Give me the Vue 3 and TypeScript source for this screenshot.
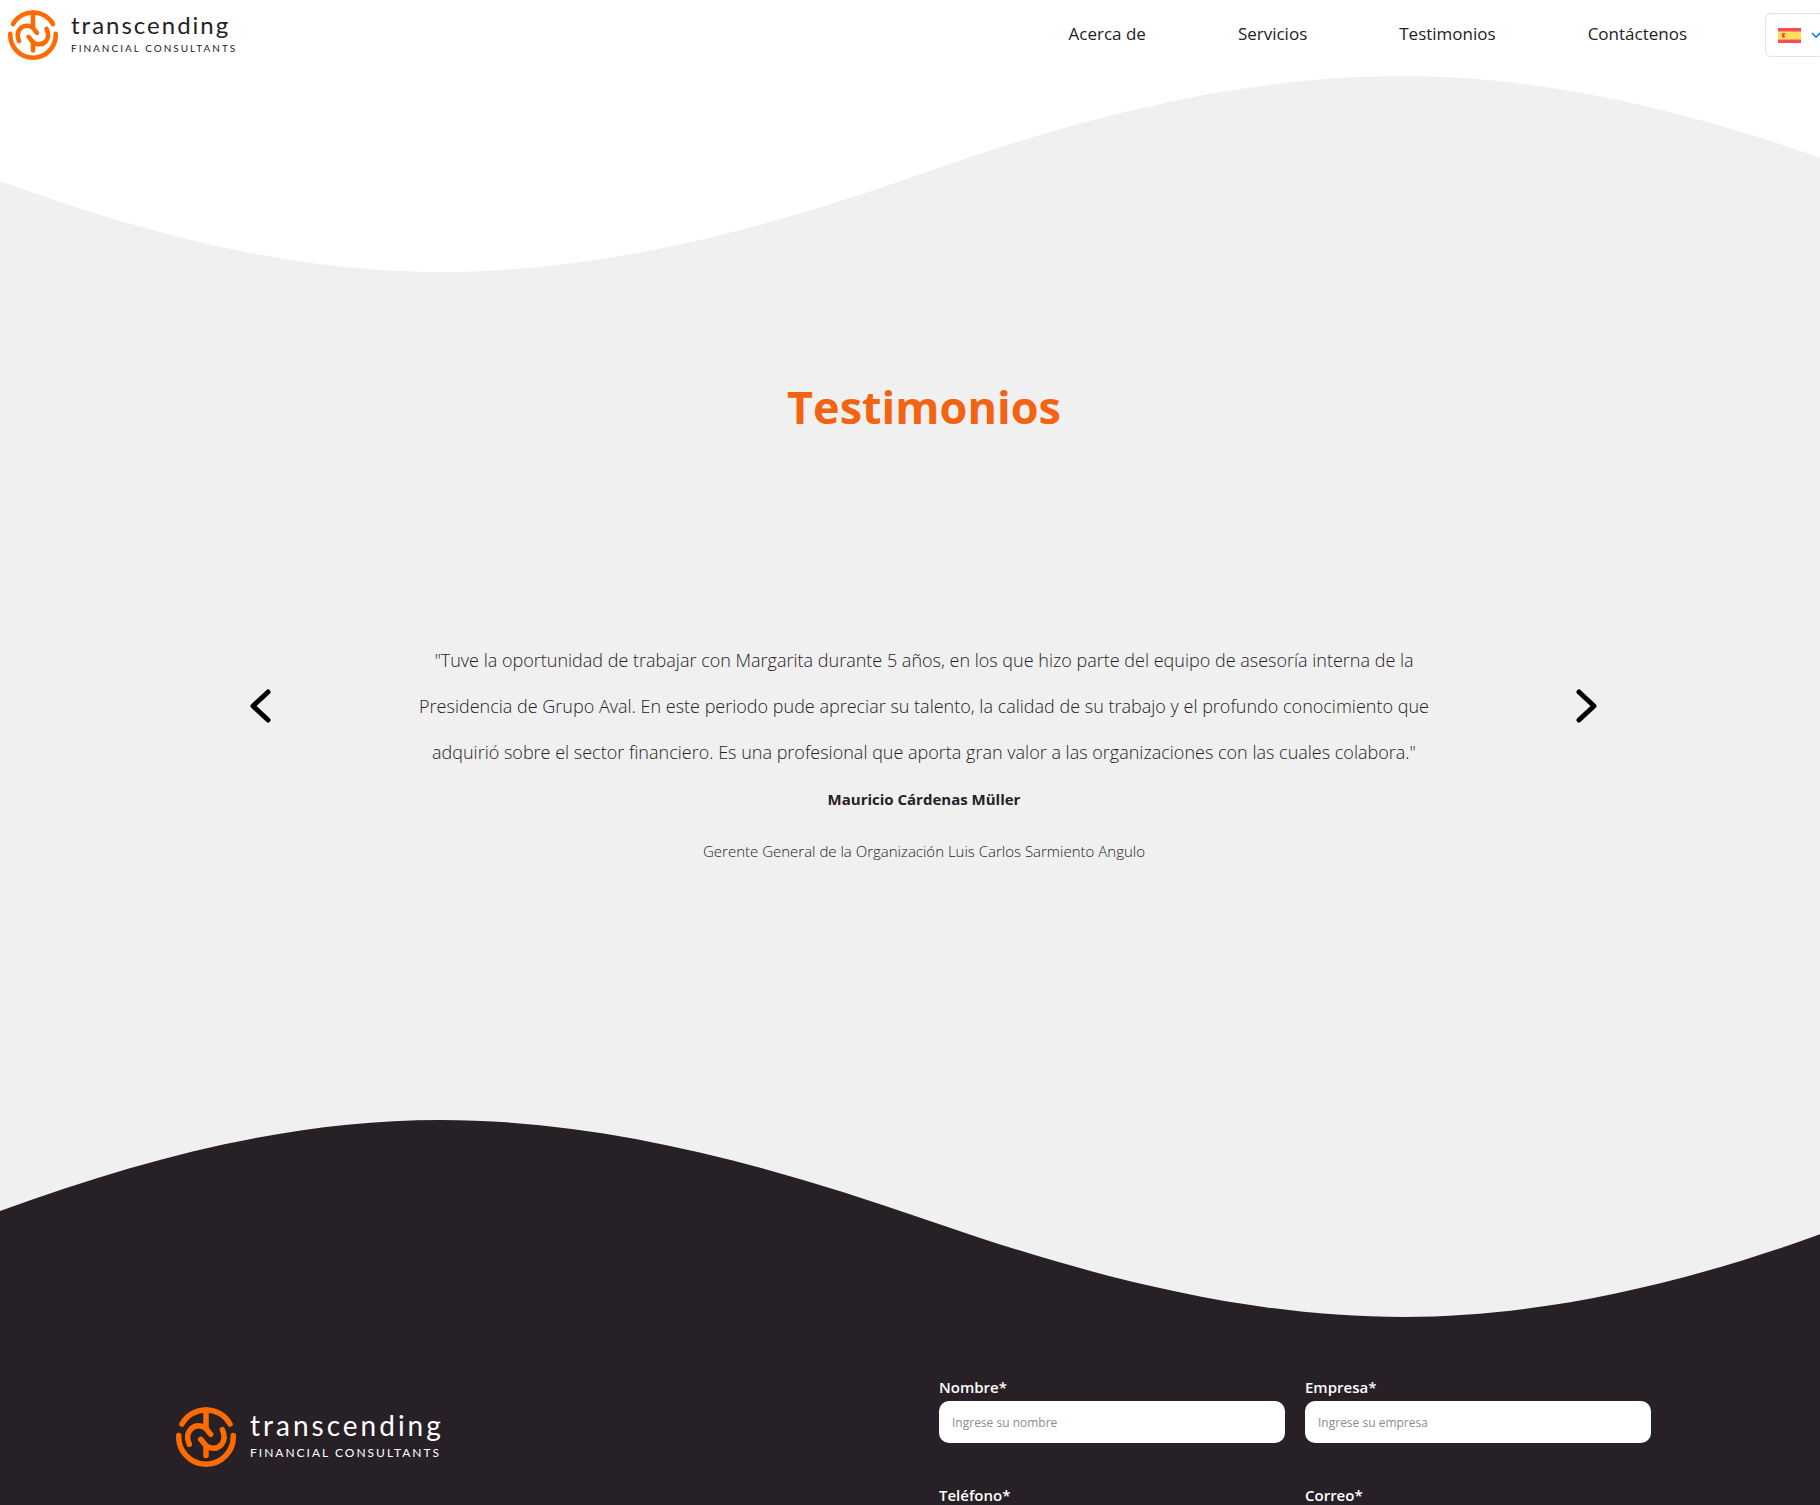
<script setup lang="ts">
import { ref } from 'vue'

interface NavLink { label: string; href: string }
interface Field { id: string; label: string; placeholder: string; type: string }

const links: NavLink[] = [
  { label: 'Acerca de', href: '#acerca' },
  { label: 'Servicios', href: '#servicios' },
  { label: 'Testimonios', href: '#testimonios' },
  { label: 'Contáctenos', href: '#contacto' },
]

const fields: Field[] = [
  { id: 'nombre', label: 'Nombre*', placeholder: 'Ingrese su nombre', type: 'text' },
  { id: 'empresa', label: 'Empresa*', placeholder: 'Ingrese su empresa', type: 'text' },
  { id: 'telefono', label: 'Teléfono*', placeholder: '', type: 'tel' },
  { id: 'correo', label: 'Correo*', placeholder: '', type: 'email' },
]

const values = ref<Record<string, string>>({ nombre: '', empresa: '', telefono: '', correo: '' })
</script>

<template>
  <div class="page">
    <div class="canvas">
      <header class="topbar">
        <a class="brand" href="#inicio">
          <svg class="mark" viewBox="0 0 60 60" aria-hidden="true">
            <g fill="none" stroke="#ff6b00" stroke-width="5.5" stroke-linecap="round" stroke-linejoin="round">
              <path d="M6 17A27.500 27.500 0 0 1 54 17" />
              <path d="M2.750 28.500A27.300 27.300 0 0 0 30 57.200A27.300 27.300 0 0 0 57.250 28.500" />
              <path d="M30 3V21" />
              <path d="M13.300 37.300C8 25 17 17 26 19.300C32 21 31 24 34.700 27.300" />
              <path d="M46.300 22.700C52 35 43 43 34 40.700C28 39 28.500 36 24.700 32.300" />
              <path d="M30 39V48.500" />
            </g>
          </svg>
          <span class="words"><span class="name">transcending</span><span class="tag">FINANCIAL CONSULTANTS</span></span>
        </a>
        <nav class="nav">
          <a v-for="link in links" :key="link.href" :href="link.href">{{ link.label }}</a>
        </nav>
        <button class="lang" type="button" aria-label="Español">
          <svg class="flag" viewBox="0 0 23 15" aria-hidden="true">
            <path fill="#ff4b55" d="M0 0H23V15H0Z" />
            <path fill="#ffe15a" d="M0 4H23V11H0Z" />
            <path fill="#ff9a57" d="M0 3H23V4H0ZM0 11H23V12H0Z" />
            <path fill="#f5c98a" d="M2 5H3V10H2ZM8 5H9V10H8Z" />
            <path fill="#e8503a" d="M4 5H7V7H6V8H7V9L5 10L4 9Z" />
          </svg>
          <svg class="caret" viewBox="0 0 10 6" aria-hidden="true">
            <path d="M1 1L5 5L9 1" fill="none" stroke="#1976d2" stroke-width="1.6" />
          </svg>
        </button>
      </header>

      <svg class="wave" viewBox="0 0 1848 200" preserveAspectRatio="none" aria-hidden="true">
        <path fill="#f0f0f0" d="M0 105C150 160 295 196 440 196C600 196 760 155 924 97C1088 39 1244 0 1404 0C1549 0 1700 37 1848 92V200H0Z" />
      </svg>

      <main id="testimonios" class="testimonials">
        <h2>Testimonios</h2>
        <div class="carousel">
          <button type="button" class="arrow" aria-label="Anterior">
            <svg viewBox="0 0 22 34" aria-hidden="true"><path d="M18 3L3 17L18 31" /></svg>
          </button>
          <figure class="slide">
            <blockquote>
              "Tuve la oportunidad de trabajar con Margarita durante 5 años, en los que hizo parte del equipo de asesoría interna de la<br>
              Presidencia de Grupo Aval. En este periodo pude apreciar su talento, la calidad de su trabajo y el profundo conocimiento que<br>
              adquirió sobre el sector financiero. Es una profesional que aporta gran valor a las organizaciones con las cuales colabora."
            </blockquote>
            <figcaption>
              <strong>Mauricio Cárdenas Müller</strong>
              <span>Gerente General de la Organización Luis Carlos Sarmiento Angulo</span>
            </figcaption>
          </figure>
          <button type="button" class="arrow" aria-label="Siguiente">
            <svg viewBox="0 0 22 34" aria-hidden="true"><path d="M3 3L18 17L3 31" /></svg>
          </button>
        </div>
      </main>

      <svg class="wave dark" viewBox="0 0 1848 200" preserveAspectRatio="none" aria-hidden="true">
        <path fill="#272026" d="M0 91C150 36 295 0 440 0C600 0 760 42 924 99C1088 156 1244 197 1404 197C1549 197 1700 160 1848 104V200H0Z" />
      </svg>

      <footer id="contacto" class="footer">
        <a class="brand large" href="#inicio">
          <svg class="mark" viewBox="0 0 60 60" aria-hidden="true">
            <g fill="none" stroke="#ff6b00" stroke-width="5.5" stroke-linecap="round" stroke-linejoin="round">
              <path d="M6 17A27.500 27.500 0 0 1 54 17" />
              <path d="M2.750 28.500A27.300 27.300 0 0 0 30 57.200A27.300 27.300 0 0 0 57.250 28.500" />
              <path d="M30 3V21" />
              <path d="M13.300 37.300C8 25 17 17 26 19.300C32 21 31 24 34.700 27.300" />
              <path d="M46.300 22.700C52 35 43 43 34 40.700C28 39 28.500 36 24.700 32.300" />
              <path d="M30 39V48.500" />
            </g>
          </svg>
          <span class="words"><span class="name">transcending</span><span class="tag">FINANCIAL CONSULTANTS</span></span>
        </a>
        <form class="form" @submit.prevent>
          <div v-for="field in fields" :key="field.id" class="field">
            <label :for="field.id">{{ field.label }}</label>
            <input :id="field.id" v-model="values[field.id]" :type="field.type" :placeholder="field.placeholder">
          </div>
        </form>
      </footer>
    </div>
  </div>
</template>

<style>
body {
  background: #fff;
}
</style>

<style scoped>
.page {
  height: 100vh;
  overflow-x: hidden;
  overflow-y: auto;
  scrollbar-width: none;
  font-family: "Open Sans", "Noto Sans", sans-serif;
  color: #272026;
}
/* The layout runs slightly past the right edge of the window. */
.canvas {
  width: calc(100% + 28px);
}
.canvas *,
.canvas {
  box-sizing: border-box;
}
.topbar {
  display: flex;
  align-items: center;
  height: 76px;
  padding: 0 24px 6px 8px;
}
.brand {
  display: flex;
  align-items: center;
  gap: 13px;
  color: #272026;
  text-decoration: none;
}
.mark {
  width: 50px;
  height: 50px;
  display: block;
}
.words {
  display: flex;
  flex-direction: column;
  font-family: Lato, sans-serif;
}
.name {
  font-size: 24px;
  line-height: 26px;
  letter-spacing: 2px;
}
.tag {
  font-size: 10px;
  line-height: 20px;
  letter-spacing: 2px;
}
.nav {
  display: flex;
  gap: 92px;
  margin-left: auto;
}
.nav a {
  font-size: 17px;
  line-height: 24px;
  padding-bottom: 2px;
  color: #272026;
  text-decoration: none;
}
.lang {
  display: flex;
  align-items: center;
  gap: 10px;
  width: 59px;
  height: 44px;
  margin-left: 78px;
  padding: 0 12px;
  border: 1px solid #e2e2e2;
  border-radius: 6px;
  background: #fff;
}
.flag {
  flex: none;
  width: 23px;
  height: 15px;
}
.caret {
  flex: none;
  width: 10px;
  height: 6px;
}
.wave {
  display: block;
  width: 100%;
  height: 200px;
}
.wave.dark {
  background: #f0f0f0;
}
.testimonials {
  padding: 95px 0 241px;
  background: #f0f0f0;
}
h2 {
  margin: 0;
  font-size: 45px;
  line-height: 72px;
  font-weight: 700;
  text-align: center;
  color: #f26411;
}
.carousel {
  display: flex;
  align-items: flex-start;
  justify-content: space-between;
  margin-top: 194px;
  padding: 0 250px;
}
.arrow {
  margin: 52px 0 0;
  padding: 0;
  border: 0;
  background: none;
}
.arrow svg {
  display: block;
  width: 22px;
  height: 34px;
  fill: none;
  stroke: #000;
  stroke-width: 5;
  stroke-linecap: round;
  stroke-linejoin: round;
}
.slide {
  margin: 0;
  text-align: center;
}
blockquote {
  margin: 0;
  font-size: 18px;
  line-height: 46px;
  font-weight: 300;
  white-space: nowrap;
}
figcaption {
  display: flex;
  flex-direction: column;
}
figcaption strong {
  font-size: 15px;
  line-height: 48px;
}
figcaption span {
  font-size: 15px;
  line-height: 56px;
  font-weight: 300;
}
.footer {
  display: flex;
  justify-content: space-between;
  align-items: flex-start;
  padding: 55px 197px 80px 176px;
  background: #272026;
}
.brand.large {
  gap: 14px;
  margin-top: 32px;
  color: #fff;
}
.large .mark {
  width: 60px;
  height: 60px;
}
.large .name {
  font-size: 28px;
  line-height: 32px;
  letter-spacing: 3px;
}
.large .tag {
  font-size: 12px;
  line-height: 24px;
}
.form {
  display: grid;
  grid-template-columns: 346px 346px;
  gap: 40px 20px;
}
.field {
  display: flex;
  flex-direction: column;
  gap: 2px;
}
label {
  font-size: 15px;
  line-height: 24px;
  font-weight: 600;
  color: #fff;
}
input {
  width: 100%;
  height: 42px;
  padding: 0 13px;
  border: 0;
  border-radius: 10px;
  background: #fff;
  font-family: inherit;
  font-size: 12px;
  color: #272026;
}
input::placeholder {
  color: #8c8c8c;
}
</style>
